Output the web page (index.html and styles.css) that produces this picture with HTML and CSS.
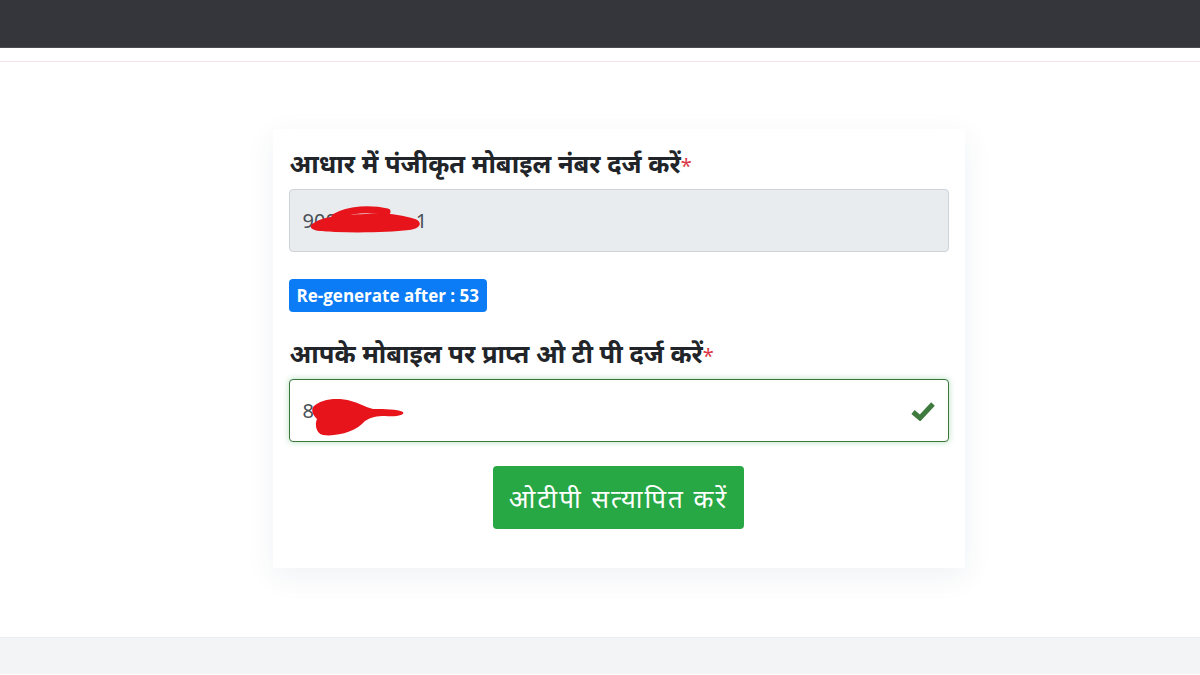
FILE: index.html
```html
<!DOCTYPE html>
<html lang="hi">
<head>
    <meta charset="UTF-8">
    <meta name="viewport" content="width=device-width, initial-scale=1.0">
    <title>OTP सत्यापन</title>
<link rel="stylesheet" href="styles.css">
</head>
<body>
    <div class="topbar"></div>
    <div class="rule"></div>

    <main class="page">
        <form class="card">
            <label class="label">आधार में पंजीकृत मोबाइल नंबर दर्ज करें<span class="req">*</span></label>
            <div class="field">
                <input class="input input-readonly" type="text" value="9001             1" readonly>
                <!-- redaction mark from the screenshot -->
                <svg class="scribble scribble-1" width="130" height="34" viewBox="0 0 130 34">
                    <path d="M6 22 C18 12 40 12 60 11 C80 9 96 12 110 16 C118 19 116 26 104 27 C86 29 60 30 30 29 C14 28 4 28 6 22 Z" fill="#e8141b"/>
                    <path d="M30 14 C44 6 66 5 82 9" stroke="#e8141b" stroke-width="7" fill="none" stroke-linecap="round"/>
                </svg>
            </div>

            <div class="timer">Re-generate after : 53</div>

            <label class="label">आपके मोबाइल पर प्राप्त ओ टी पी दर्ज करें<span class="req">*</span></label>
            <div class="field">
                <input class="input input-valid" type="text" value="8">
                <svg class="scribble scribble-2" width="100" height="44" viewBox="0 0 100 44">
                    <path d="M6 12 C14 4 30 2 44 6 C52 8 58 12 66 14 C78 14 90 14 96 17 C98 20 90 22 78 21 C70 21 64 22 58 26 C50 36 30 42 16 40 C8 38 8 28 10 24 C6 20 4 16 6 12 Z" fill="#e8141b"/>
                </svg>
                <svg class="check" width="24" height="20" viewBox="0 0 24 20">
                    <path d="M2 11 L9 17 L22 3" stroke="#3f7a3f" stroke-width="5" fill="none" stroke-linejoin="miter"/>
                </svg>
            </div>

            <div class="actions">
                <button class="btn" type="button">ओटीपी सत्यापित करें</button>
            </div>
        </form>
    </main>

    <footer class="footer"></footer>
</body>
</html>
```

FILE: styles.css
```css
*{box-sizing:border-box}
body{margin:0;font-family:"Noto Sans","Liberation Sans",sans-serif;color:#212529;background:#fff}

.topbar{height:48px;background:#35363b;border-bottom:1px solid #4a4d50}
.rule{height:14px;border-bottom:1px solid #f6e3e7}

.page{display:flex;justify-content:center;padding:67px 0 69px 37px}
.card{width:692px;background:#fff;padding:16px 16px 39px;box-shadow:0 8px 28px rgba(30,50,90,.07);display:flex;flex-direction:column}

.label{font-size:25.5px;font-weight:700;line-height:36px;margin-bottom:5px;padding-left:1px}
.req{color:#dc3545;font-weight:400;font-size:20px}

.field{position:relative}
.input{width:100%;height:63px;font-family:inherit;font-size:20px;color:#495057;padding:0 13px;border:1px solid #ced4da;border-radius:4px;background:#fff;outline:none;white-space:pre}
.input-readonly{background:#e9ecef}
.input-valid{border-color:#3c763d;box-shadow:0 0 6px rgba(40,167,69,.35)}

.scribble{position:absolute;pointer-events:none}
.scribble-1{left:16px;top:14px}
.scribble-2{left:18px;top:16px}
.check{position:absolute;right:14px;top:22px}

.timer{align-self:flex-start;margin:27px 0 23px;background:#0b7cf5;color:#fff;font-family:"Open Sans","Noto Sans",sans-serif;font-weight:700;font-size:17px;line-height:33px;padding:0 8px;border-radius:4px}

.actions{display:flex;justify-content:center;padding-top:24px}
.btn{width:251px;height:63px;background:#28a745;color:#fff;border:none;border-radius:4px;font-family:inherit;font-size:26px;letter-spacing:2px}

.footer{height:37px;background:#f3f4f6;border-top:1px solid #eceef1}
```
